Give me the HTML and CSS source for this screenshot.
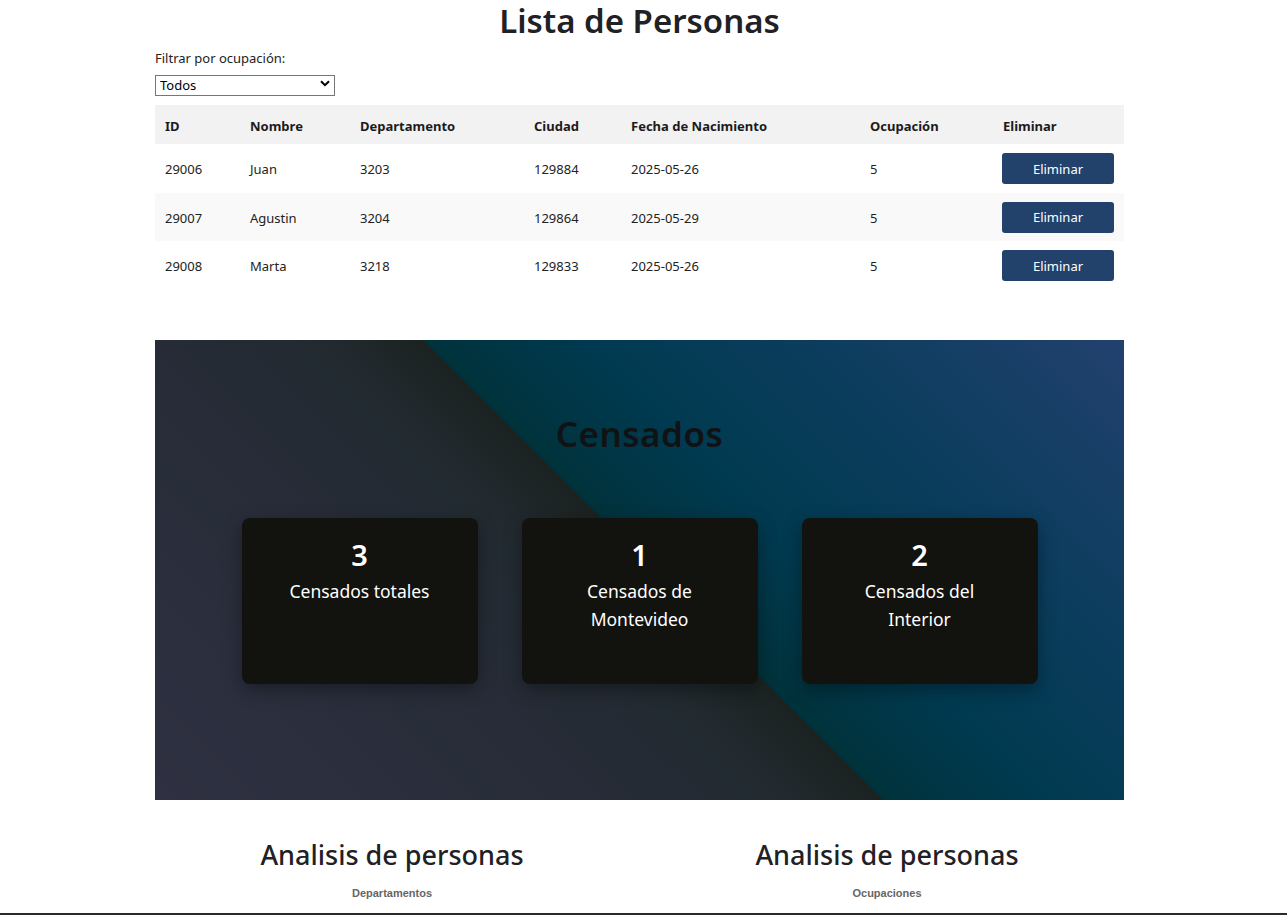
FILE: index.html
```html
<!DOCTYPE html>
<html lang="es">
<head>
<meta charset="utf-8">
<title>Lista de Personas</title>
<link rel="stylesheet" href="styles.css">
</head>
<body>
<main class="page">
  <h1 class="title">Lista de Personas</h1>
  <label class="filter-label" for="ocup">Filtrar por ocupación:</label>
  <div class="select-wrap">
    <select id="ocup" class="select">
      <option>Todos</option>
    </select>
    <svg class="chev" width="10" height="7" viewBox="0 0 10 7"><path d="M1 1.2 L5 5.2 L9 1.2" fill="none" stroke="#000" stroke-width="2"/></svg>
  </div>

  <table class="table">
    <thead>
      <tr>
        <th class="c-id">ID</th>
        <th class="c-nom">Nombre</th>
        <th class="c-dep">Departamento</th>
        <th class="c-ciu">Ciudad</th>
        <th class="c-fec">Fecha de Nacimiento</th>
        <th class="c-ocu">Ocupación</th>
        <th class="c-eli">Eliminar</th>
      </tr>
    </thead>
    <tbody>
      <tr>
        <td>29006</td><td>Juan</td><td>3203</td><td>129884</td><td>2025-05-26</td><td>5</td>
        <td><button class="btn">Eliminar</button></td>
      </tr>
      <tr>
        <td>29007</td><td>Agustin</td><td>3204</td><td>129864</td><td>2025-05-29</td><td>5</td>
        <td><button class="btn">Eliminar</button></td>
      </tr>
      <tr>
        <td>29008</td><td>Marta</td><td>3218</td><td>129833</td><td>2025-05-26</td><td>5</td>
        <td><button class="btn">Eliminar</button></td>
      </tr>
    </tbody>
  </table>

  <section class="censo">
    <h2 class="censo-title">Censados</h2>
    <div class="cards">
      <div class="card"><div class="num">3</div><div class="lbl">Censados totales</div></div>
      <div class="card"><div class="num">1</div><div class="lbl">Censados de<br>Montevideo</div></div>
      <div class="card"><div class="num">2</div><div class="lbl">Censados del<br>Interior</div></div>
    </div>
  </section>

  <section class="analisis">
    <div class="col">
      <h2 class="an-title">Analisis de personas</h2>
      <div class="chart-title">Departamentos</div>
    </div>
    <div class="col">
      <h2 class="an-title">Analisis de personas</h2>
      <div class="chart-title">Ocupaciones</div>
    </div>
  </section>
</main>
<div class="bottom-bar"></div>
</body>
</html>
```
FILE: styles.css
```css
* { box-sizing: border-box; }
html, body { margin: 0; padding: 0; background: #fff; }
body {
  font-family: "Noto Sans", "Open Sans", sans-serif;
  color: #212121;
  overflow: hidden;
  height: 915px;
}
.page {
  width: 969px;
  margin-left: 155px;
}
.title {
  margin: 0;
  height: 46px;
  text-align: center;
  font-size: 33px;
  font-weight: 600;
  line-height: 42px;
  color: #1f2125;
}
.filter-label {
  display: block;
  font-size: 13px;
  line-height: 18px;
  margin-top: 3px;
  color: #222;
}
.select-wrap {
  position: relative;
  width: 180px;
  height: 21px;
  margin-top: 6px;
}
.select {
  -webkit-appearance: none;
  appearance: none;
  width: 180px;
  height: 21px;
  border: 1px solid #767676;
  border-radius: 0;
  background: #fff;
  font-family: inherit;
  font-size: 13px;
  padding: 0 4px;
  color: #000;
  line-height: 19px;
}
.chev {
  position: absolute;
  right: 5px;
  top: 7px;
  pointer-events: none;
}
.table {
  margin-top: 11px;
  width: 969px;
  border-collapse: collapse;
  font-size: 13px;
}
.table th {
  background: #f2f2f2;
  text-align: left;
  font-weight: 700;
  height: 39px;
  padding: 2px 10px 0;
  color: #1b1b1b;
}
.table td {
  height: 48.5px;
  padding: 2px 10px 0;
  color: #222;
}
.table tbody tr:nth-child(2) td { background: #f9f9f9; }
.c-id { width: 85px; }
.c-nom { width: 110px; }
.c-dep { width: 174px; }
.c-ciu { width: 97px; }
.c-fec { width: 239px; }
.c-ocu { width: 133px; }
.btn {
  width: 112px;
  height: 31px;
  background: #22416b;
  color: #fff;
  border: 0;
  border-radius: 3px;
  font-family: inherit;
  font-size: 13px;
  margin-left: -1px;
  margin-top: -1px;
}
.censo {
  margin-top: 50px;
  height: 460px;
  background: linear-gradient(45deg, #2f3142 0%, #272c38 30%, #222a30 44%, #1b2220 51%, #00323b 51%, #003a50 62%, #0d3d5f 80%, #22416e 100%);
  padding-top: 70px;
}
.censo-title {
  margin: 0;
  text-align: center;
  font-size: 35px;
  font-weight: 600;
  line-height: 48px;
  letter-spacing: 0.5px;
  color: #111214;
}
.cards {
  display: flex;
  justify-content: center;
  gap: 44px;
  margin-top: 60px;
}
.card {
  width: 236px;
  height: 166px;
  background: #12120e;
  border-radius: 8px;
  box-shadow: 0 6px 18px rgba(0, 0, 0, 0.35);
  text-align: center;
  color: #fff;
  padding-top: 18px;
}
.num {
  font-size: 29px;
  font-weight: 600;
  line-height: 38px;
}
.lbl {
  font-size: 17.5px;
  line-height: 28px;
  margin-top: 3px;
}
.analisis {
  display: flex;
  justify-content: space-between;
  margin-top: 36px;
}
.col {
  width: 474px;
  text-align: center;
}
.an-title {
  margin: 0;
  font-size: 27px;
  font-weight: 500;
  line-height: 38px;
  color: #1f2125;
}
.chart-title {
  margin-top: 13px;
  font-family: "Liberation Sans", Arial, sans-serif;
  font-size: 11px;
  font-weight: 700;
  color: #666;
}
.bottom-bar {
  position: absolute;
  left: 0;
  top: 913px;
  width: 1287px;
  height: 2px;
  background: #2a2a2a;
}
```
